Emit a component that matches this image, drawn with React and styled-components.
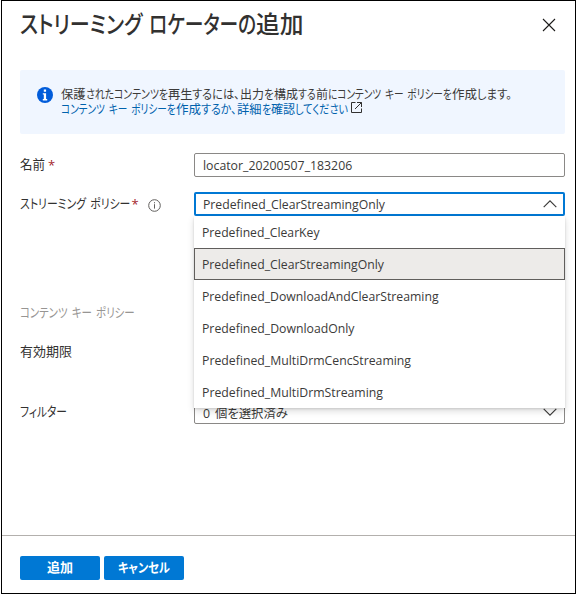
import React, { useLayoutEffect, useRef, useState } from "react";
import styled, { createGlobalStyle } from "styled-components";

const GlobalStyle = createGlobalStyle`
  * { box-sizing: border-box; }
  body { margin: 0; background: #fff; }
  button { font: inherit; }
`;

const Frame = styled.div`
  width: 576px;
  height: 594px;
  padding-left: 1px;
  background: #fff;
  color: #3b3a39;
  font-family: "Open Sans", "Noto Sans CJK JP", sans-serif;
  font-size: 13px;
`;

const Panel = styled.section`
  display: flex;
  flex-direction: column;
  height: 594px;
  border: 1px solid #000;
`;

const Header = styled.header`
  display: flex;
  justify-content: space-between;
  align-items: center;
  height: 48px;
  padding: 0 19px 0 18px;
`;

const Title = styled.h1`
  margin: -2px 0 0;
  font-size: 24px;
  line-height: 36px;
  font-weight: 500;
  color: #323130;
`;

const IconButton = styled.button`
  display: flex;
  padding: 0;
  border: 0;
  background: none;
  color: #1b1a19;
`;

const Body = styled.div`
  flex: 1;
  padding: 21px 10px 0 18px;
`;

const Notice = styled.div`
  display: flex;
  height: 64px;
  padding: 17px 16px;
  gap: 8px;
  border-radius: 2px;
  background: #f0f6ff;
  font-size: 12.5px;
`;

const NoticeText = styled.div`
  display: flex;
  flex-direction: column;
`;

const NoticeLine = styled.div`
  display: flex;
  height: 15px;
  line-height: 15px;
`;

const NoticeLink = styled.a`
  display: flex;
  color: #0062ad;
`;

const Form = styled.div`
  display: grid;
  grid-template-columns: 174px 1fr;
  grid-template-rows: 24px 24px 24px 24px 24px;
  row-gap: 15px;
  padding-top: 19px;
`;

const Label = styled.label`
  grid-column: 1;
  grid-row: ${(p) => p.$row};
  display: flex;
  align-items: center;
  height: 24px;
  line-height: 24px;
  margin-top: ${(p) => p.$shift || 0}px;
  padding-bottom: 2px;
  color: ${(p) => (p.$muted ? "#979593" : "#323130")};
`;

const Star = styled.span`
  width: 8px;
  margin-left: ${(p) => p.$gap}px;
  padding-top: 1px;
  font-size: 13px;
  color: #a4262c;
`;

const Field = styled.div`
  grid-column: 2;
  grid-row: ${(p) => p.$row};
  position: relative;
  height: 24px;
  margin-top: ${(p) => p.$shift || 0}px;
`;

const Box = styled.div`
  display: flex;
  justify-content: space-between;
  align-items: center;
  height: 24px;
  padding: ${(p) => (p.$open ? "0 6px 0 7px" : "0 7px 0 8px")};
  border: ${(p) => (p.$open ? "2px solid #0078d4" : "1px solid #8a8886")};
  border-radius: 2px;
  background: #fff;
  font-size: 12.5px;
`;

const Menu = styled.ul`
  position: absolute;
  z-index: 2;
  top: 24px;
  left: 0;
  width: 371px;
  margin: 0;
  padding: 0;
  list-style: none;
  background: #fff;
  box-shadow: 0 3px 7px rgba(0, 0, 0, 0.14), 0 0.6px 2px rgba(0, 0, 0, 0.12);
`;

const Option = styled.li`
  display: flex;
  align-items: center;
  height: 32px;
  padding-left: 7px;
  border: 1px solid ${(p) => (p.$selected ? "#605e5c" : "transparent")};
  background: ${(p) => (p.$selected ? "#edebe9" : "transparent")};
  font-size: 12.5px;
`;

const Footer = styled.footer`
  display: flex;
  gap: 4px;
  height: 58px;
  padding: 20px 18px;
  border-top: 1px solid #b3b0ad;
`;

const Button = styled.button`
  display: flex;
  align-items: center;
  justify-content: center;
  width: 80px;
  height: 24px;
  padding: 0 0 3px;
  border: 0;
  border-radius: 2px;
  background: #0078d4;
  color: #fff;
  font-size: 13px;
  font-weight: 700;
`;

const Slot = styled.span`
  display: block;
  flex: none;
  width: ${(p) => p.$width}px;
  white-space: pre;
`;

const Glyphs = styled.span`
  display: inline-block;
  transform-origin: 0 50%;
  font-feature-settings: "palt";
  word-spacing: 0.14em;
`;

/* Condenses a run of text to the given width. */
function Fit({ width, children }) {
  const ref = useRef(null);
  const [scale, setScale] = useState(1);
  useLayoutEffect(() => {
    setScale(width / ref.current.offsetWidth);
  }, [width, children]);
  return (
    <Slot $width={width}>
      <Glyphs ref={ref} style={{ transform: `scaleX(${scale})` }}>{children}</Glyphs>
    </Slot>
  );
}

const Runs = ({ items }) => items.map(([text, width], i) => <Fit key={i} width={width}>{text}</Fit>);

const RunLine = styled.span`
  display: flex;
`;

const TITLE = [["ストリーミング", 122], [" ", 7], ["ロケーターの", 107], ["追加", 47.5]];
const NOTICE = [
  ["保護", 24.5], ["されたコンテンツを", 82], ["再生", 24.5], ["するには、", 47.5], ["出力", 24],
  ["を", 10], ["構成", 24], ["する", 18], ["前", 12.5], ["にコンテンツ キー ポリシーを", 124],
  ["作成", 25], ["します。", 34.5],
];
const LINK = [
  ["コンテンツ キー ポリシーを", 115], ["作成", 25], ["するか、", 36], ["詳細", 24.5], ["を", 9.5],
  ["確認", 24], ["してください", 53.5],
];
const OPTIONS = [
  ["Predefined_ClearKey", 118],
  ["Predefined_ClearStreamingOnly", 182],
  ["Predefined_DownloadAndClearStreaming", 237],
  ["Predefined_DownloadOnly", 153],
  ["Predefined_MultiDrmCencStreaming", 209],
  ["Predefined_MultiDrmStreaming", 180.5],
];

const LineIcon = styled.svg`
  display: block;
  flex: none;
  fill: none;
  stroke: currentColor;
`;

const HintIcon = styled(LineIcon)`
  margin: 4px 0 0 8px;
  color: #605e5c;
`;

const ExternalIcon = styled(LineIcon)`
  margin: 0 0 0 2.5px;
  color: #323130;
`;

const Chevron = ({ up }) => (
  <LineIcon width="14" height="8" viewBox="0 0 14 8" strokeWidth="1.15">
    <path d={up ? "M.7 7.2 7 .9l6.3 6.3" : "M.7.8 7 7.1 13.3.8"} />
  </LineIcon>
);

export default function App() {
  return (
    <>
      <GlobalStyle />
      <Frame>
        <Panel>
          <Header>
            <Title><RunLine><Runs items={TITLE} /></RunLine></Title>
            <IconButton aria-label="閉じる">
              <LineIcon width="14" height="14" viewBox="0 0 14 14" strokeWidth="1.1">
                <path d="m1 1 12 12M13 1 1 13" />
              </LineIcon>
            </IconButton>
          </Header>
          <Body>
            <Notice>
              <svg width="17" height="17" viewBox="0 0 17 17">
                <circle cx="9" cy="8" r="8" fill="#015cda" />
                <path d="M7.8 2.6h2.3v2.1H7.8zM6.8 6.2h3.3v5.9h1.1v1.3H6.8v-1.3h1V7.5h-1z" fill="#fff" />
              </svg>
              <NoticeText>
                <NoticeLine><Runs items={NOTICE} /></NoticeLine>
                <NoticeLine>
                  <NoticeLink><Runs items={LINK} /></NoticeLink>
                  <ExternalIcon width="11" height="11" viewBox="0 0 11 11">
                    <path d="M4.5 .5h-4v10h10v-4M6 .5h4.5V5M10.5.5l-6.5 6.5" />
                  </ExternalIcon>
                </NoticeLine>
              </NoticeText>
            </Notice>
            <Form>
              <Label $row={1}><Fit width={25}>名前</Fit><Star $gap={3}>*</Star></Label>
              <Field $row={1}><Box><Fit width={149.5}>locator_20200507_183206</Fit></Box></Field>

              <Label $row={2}>
                <Fit width={110}>ストリーミング ポリシー</Fit><Star $gap={1.5}>*</Star>
                <HintIcon width="13" height="13" viewBox="0 0 13 13">
                  <circle cx="6.5" cy="6.5" r="5.8" />
                  <path d="M6.5 5.2v4.4M6.5 3.2v1.1" />
                </HintIcon>
              </Label>
              <Field $row={2}>
                <Box $open><Fit width={182}>Predefined_ClearStreamingOnly</Fit><Chevron up /></Box>
                <Menu>
                  {OPTIONS.map(([text, width], i) => (
                    <Option key={text} $selected={i === 1}><Fit width={width}>{text}</Fit></Option>
                  ))}
                </Menu>
              </Field>

              <Label $row={4} $muted $shift={31}><Fit width={115}>コンテンツ キー ポリシー</Fit></Label>
              <Label $row={5} $shift={31}><Fit width={52}>有効期限</Fit></Label>
              <Label $row={6} $shift={52}><Fit width={47}>フィルター</Fit></Label>
              <Field $row={6} $shift={52}>
                <Box><Fit width={85}>0 個を選択済み</Fit><Chevron /></Box>
              </Field>
            </Form>
          </Body>
          <Footer>
            <Button><Fit width={26}>追加</Fit></Button>
            <Button><Fit width={52}>キャンセル</Fit></Button>
          </Footer>
        </Panel>
      </Frame>
    </>
  );
}
